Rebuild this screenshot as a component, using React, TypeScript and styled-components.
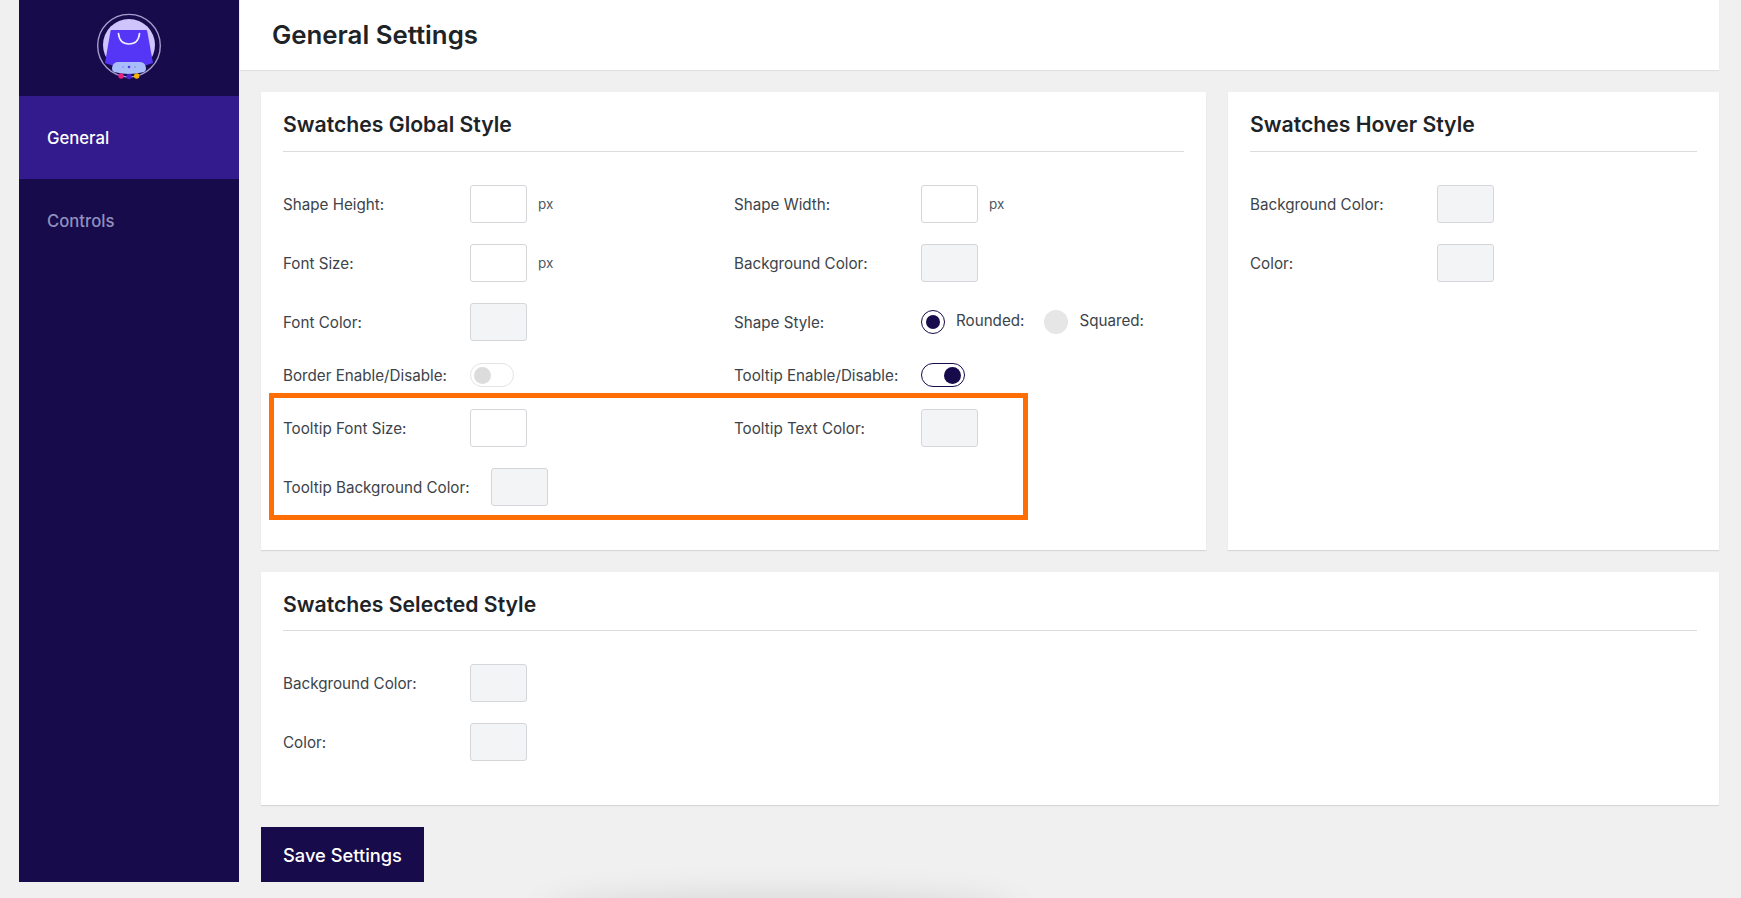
import React from "react";
import styled, { createGlobalStyle } from "styled-components";

const Global = createGlobalStyle`
  html, body { margin: 0; padding: 0; height: 100%; overflow: hidden; background: #f0f0f0; }
  body { font-family: Inter, "Liberation Sans", sans-serif; color: #3c434a; }
  #root { height: 100%; }
`;

const Page = styled.div`
  display: flex;
  height: 898px;
  padding: 0 22px 16px 19px;
  box-sizing: border-box;
  position: relative;
  overflow: hidden;
`;

const Sidebar = styled.aside`
  width: 220px;
  flex: none;
  height: 882px;
  background: #170b4b;
  display: flex;
  flex-direction: column;
`;

const LogoArea = styled.div`
  height: 96px;
  display: flex;
  justify-content: center;
  padding-top: 12px;
  box-sizing: border-box;
`;

const NavItem = styled.div<{ $active?: boolean }>`
  height: 83px;
  display: flex;
  align-items: center;
  padding-left: 28px;
  font-size: 16.7px;
  font-weight: 500;
  color: ${(p) => (p.$active ? "#ffffff" : "#8f90bd")};
  background: ${(p) => (p.$active ? "#331b8e" : "transparent")};
`;

const Main = styled.main`
  flex: 1;
  margin-left: 1px;
  display: flex;
  flex-direction: column;
  min-width: 0;
`;

const Header = styled.header`
  height: 70px;
  flex: none;
  background: #fff;
  box-shadow: 0 1px 1px rgba(0, 0, 0, 0.06);
  display: flex;
  align-items: center;
  padding: 0 0 2px 32px;
  box-sizing: border-box;
`;

const PageTitle = styled.h1`
  margin: 0;
  font-size: 25.8px;
  font-weight: 600;
  color: #1d2327;
`;

const Content = styled.div`
  padding: 22px 0 0 21px;
  display: flex;
  flex-direction: column;
`;

const TopCards = styled.div`
  display: flex;
  gap: 22px;
  margin-bottom: 22px;
  flex: none;
`;

const Card = styled.section<{ $w?: number; $h: number; $grow?: boolean }>`
  position: relative;
  background: #fff;
  box-sizing: border-box;
  height: ${(p) => p.$h}px;
  ${(p) => (p.$w ? `width: ${p.$w}px;` : "")}
  flex: ${(p) => (p.$grow ? "1 1 auto" : "none")};
  padding: 0 22px;
  box-shadow: 0 1px 1px rgba(0, 0, 0, 0.1);
`;

const CardTitle = styled.h2<{ $compact?: boolean }>`
  margin: 0 0 33px;
  height: ${(p) => (p.$compact ? 59 : 60)}px;
  box-sizing: border-box;
  padding-top: 17px;
  font-size: 21.2px;
  line-height: 30px;
  font-weight: 600;
  color: #1d2327;
  border-bottom: 1px solid #dcdcde;
`;

const Grid = styled.div`
  display: grid;
  grid-template-columns: 451px 1fr;
  align-items: center;
  row-gap: 21px;
`;

const Stack = styled.div`
  display: flex;
  flex-direction: column;
  row-gap: 21px;
`;

const Field = styled.div`
  display: flex;
  align-items: center;
  min-height: 26px;
`;

const Label = styled.label`
  min-width: 166px;
  margin-right: 21px;
  font-size: 15.2px;
  font-weight: 400;
  color: #3c434a;
  white-space: nowrap;
`;

const Swatch = styled.div<{ $empty?: boolean }>`
  width: 57px;
  height: 38px;
  box-sizing: border-box;
  border: 1px solid #d4d6d9;
  border-radius: 3px;
  background: ${(p) => (p.$empty ? "#fff" : "#f3f4f6")};
`;

const Unit = styled.span`
  margin-left: 11px;
  font-size: 13.5px;
  color: #50575e;
`;

const Radio = styled.span<{ $on?: boolean }>`
  width: 24px;
  height: 24px;
  box-sizing: border-box;
  border-radius: 50%;
  display: inline-flex;
  align-items: center;
  justify-content: center;
  background: ${(p) => (p.$on ? "#fff" : "#e6e6e6")};
  border: ${(p) => (p.$on ? "1px solid #170b4b" : "none")};
  &::after {
    content: "";
    display: ${(p) => (p.$on ? "block" : "none")};
    width: 14px;
    height: 14px;
    border-radius: 50%;
    background: #170b4b;
  }
`;

const RadioText = styled.span`
  margin: 0 20px 0 11px;
  font-size: 15.2px;
  color: #3c434a;
  position: relative;
  top: -2px;
`;

const Toggle = styled.span<{ $on?: boolean }>`
  width: 44px;
  height: 24px;
  box-sizing: border-box;
  border-radius: 12px;
  border: 1px solid ${(p) => (p.$on ? "#170b4b" : "#e4e4e4")};
  display: inline-flex;
  align-items: center;
  justify-content: ${(p) => (p.$on ? "flex-end" : "flex-start")};
  padding: 0 3px;
  background: #fff;
  &::after {
    content: "";
    width: 17px;
    height: 17px;
    border-radius: 50%;
    background: ${(p) => (p.$on ? "#170b4b" : "#dcdcdc")};
  }
`;

const Highlight = styled.div`
  position: absolute;
  left: 8px;
  top: 301px;
  width: 759px;
  height: 127px;
  box-sizing: border-box;
  border: 5px solid #ff6e04;
  pointer-events: none;
`;

const SaveRow = styled.div`
  flex: none;
  margin-top: 22px;
`;

const SaveButton = styled.button`
  display: block;
  width: 163px;
  height: 55px;
  border: none;
  background: #170b4b;
  color: #fff;
  font-family: Inter, sans-serif;
  font-size: 18.3px;
  font-weight: 500;
  padding: 0;
`;

const BottomShadow = styled.div`
  position: absolute;
  left: 545px;
  bottom: -30px;
  width: 470px;
  height: 26px;
  border-radius: 50%;
  box-shadow: 0 0 34px 5px rgba(0, 0, 0, 0.12);
`;

const Logo = () => (
  <svg width="68" height="72" viewBox="0 0 68 72">
    <circle cx="34" cy="33.700" r="31.300" fill="none" stroke="#a69ecf" strokeWidth="1.400" />
    <circle cx="34" cy="33" r="26" fill="#cfc4fb" />
    <path d="M16.500 18 H51 Q52 18 52.200 19 L58 51 Q34 60 10 51 L15.500 19 Q15.700 18 16.500 18 Z" fill="#5536f6" />
    <path d="M23.500 21.500 Q24.500 32 34 32 Q43.500 32 44.500 21.500" fill="none" stroke="#f1eeff" strokeWidth="1.700" strokeLinecap="round" />
    <path d="M19 60 Q16 58 17.500 54 Q19 50 23 50 H45 Q49 50 50.500 54 Q52 58 49 60 Q34 64 19 60 Z" fill="#a9bdfb" />
    <circle cx="28" cy="55" r="1" fill="#8d9cf0" />
    <circle cx="34" cy="55" r="1.300" fill="#5536f6" />
    <circle cx="40" cy="55" r="1" fill="#8d9cf0" />
    <circle cx="26" cy="64" r="2.700" fill="#e81f85" />
    <circle cx="34" cy="64.500" r="2.700" fill="#4a22d8" />
    <circle cx="41.700" cy="64" r="2.700" fill="#f4b400" />
  </svg>
);

type F = { label: string; kind: "empty" | "color" | "off" | "on" | "radio"; px?: boolean };

const rows: [F, F | null][] = [
  [{ label: "Shape Height:", kind: "empty", px: true }, { label: "Shape Width:", kind: "empty", px: true }],
  [{ label: "Font Size:", kind: "empty", px: true }, { label: "Background Color:", kind: "color" }],
  [{ label: "Font Color:", kind: "color" }, { label: "Shape Style:", kind: "radio" }],
  [{ label: "Border Enable/Disable:", kind: "off" }, { label: "Tooltip Enable/Disable:", kind: "on" }],
  [{ label: "Tooltip Font Size:", kind: "empty" }, { label: "Tooltip Text Color:", kind: "color" }],
  [{ label: "Tooltip Background Color:", kind: "color" }, null],
];

const FieldView = ({ f }: { f: F }) => (
  <Field>
    <Label>{f.label}</Label>
    {f.kind === "empty" && <Swatch $empty />}
    {f.kind === "color" && <Swatch />}
    {f.kind === "off" && <Toggle />}
    {f.kind === "on" && <Toggle $on />}
    {f.kind === "radio" && (
      <>
        <Radio $on />
        <RadioText>Rounded:</RadioText>
        <Radio />
        <RadioText>Squared:</RadioText>
      </>
    )}
    {f.px && <Unit>px</Unit>}
  </Field>
);

export default function App() {
  return (
    <Page>
      <Global />
      <Sidebar>
        <LogoArea>
          <Logo />
        </LogoArea>
        <NavItem $active>General</NavItem>
        <NavItem>Controls</NavItem>
      </Sidebar>
      <Main>
        <Header>
          <PageTitle>General Settings</PageTitle>
        </Header>
        <Content>
          <TopCards>
            <Card $w={945} $h={458}>
              <CardTitle>Swatches Global Style</CardTitle>
              <Grid>
                {rows.map(([a, b]) => (
                  <React.Fragment key={a.label}>
                    <FieldView f={a} />
                    {b ? <FieldView f={b} /> : <div />}
                  </React.Fragment>
                ))}
              </Grid>
              <Highlight />
            </Card>
            <Card $grow $h={458}>
              <CardTitle>Swatches Hover Style</CardTitle>
              <Stack>
                <FieldView f={{ label: "Background Color:", kind: "color" }} />
                <FieldView f={{ label: "Color:", kind: "color" }} />
              </Stack>
            </Card>
          </TopCards>
          <Card $h={233}>
            <CardTitle $compact>Swatches Selected Style</CardTitle>
            <Stack>
              <FieldView f={{ label: "Background Color:", kind: "color" }} />
              <FieldView f={{ label: "Color:", kind: "color" }} />
            </Stack>
          </Card>
          <SaveRow>
            <SaveButton>Save Settings</SaveButton>
          </SaveRow>
        </Content>
      </Main>
      <BottomShadow />
    </Page>
  );
}
